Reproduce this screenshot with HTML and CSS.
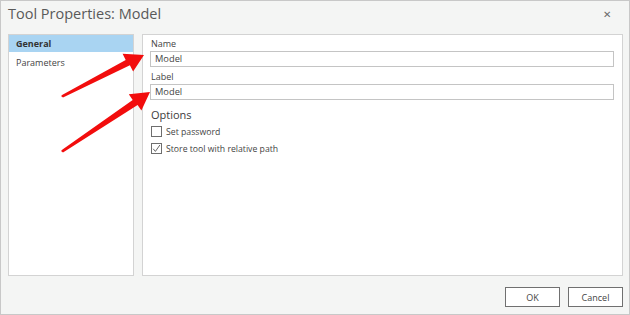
FILE: index.html
```html
<!DOCTYPE html>
<html lang="en">
<head>
    <meta charset="UTF-8">
    <title>Tool Properties: Model</title>
    <link rel="stylesheet" href="styles.css">
</head>
<body>
    <div class="dialog">
        <div class="titlebar">
            <h1 class="title">Tool Properties: Model</h1>
            <span class="close">&#x2715;</span>
        </div>

        <div class="content">
            <!-- Lista de secciones -->
            <ul class="nav">
                <li class="nav-item active">General</li>
                <li class="nav-item">Parameters</li>
            </ul>

            <!-- Panel de propiedades -->
            <div class="panel">
                <label class="field-label">Name</label>
                <div class="field-input">Model</div>
                <label class="field-label">Label</label>
                <div class="field-input">Model</div>

                <h2 class="section-title">Options</h2>
                <div class="check-row">
                    <span class="check-box"></span>
                    Set password
                </div>
                <div class="check-row">
                    <span class="check-box">
                        <svg width="9" height="9" viewBox="0 0 9 9"><path d="M1.2 4.8 L3.4 7.4 L7.9 1" fill="none" stroke="#555" stroke-width="0.9"/></svg>
                    </span>
                    Store tool with relative path
                </div>
            </div>
        </div>

        <div class="footer">
            <button class="btn">OK</button>
            <button class="btn">Cancel</button>
        </div>

        <!-- Flechas de anotación -->
        <svg class="arrows" width="630" height="315" viewBox="0 0 630 315">
            <polygon points="61,96 62.5,94.8 125.7,60 122.6,53.8 144,55 133.1,71.6 129.9,65.3 63,97.5" fill="#f20d0d"/>
            <polygon points="61,151 62.5,149.4 132.7,100 128.8,94.3 150,92 141.4,110.6 137.6,104.9 63,152.5" fill="#f20d0d"/>
        </svg>
    </div>
</body>
</html>
```

FILE: styles.css
```css
* {
    margin: 0;
    padding: 0;
    box-sizing: border-box;
}

body {
    font-family: "Open Sans", "Noto Sans", sans-serif;
    background: #ffffff;
    color: #444;
}

.dialog {
    position: relative;
    width: 630px;
    height: 315px;
    background: #f4f5f4;
    border: 1px solid #c8c8c8;
    display: flex;
    flex-direction: column;
}

.titlebar {
    height: 33px;
    display: flex;
    justify-content: space-between;
    align-items: flex-start;
    padding: 3px 18px 0 7px;
}

.title {
    font-size: 14.5px;
    font-weight: 400;
    color: #595959;
    line-height: 20px;
}

.close {
    font-size: 10px;
    color: #6a6a6a;
    line-height: 20px;
}

.content {
    display: flex;
    gap: 8px;
    padding: 0 6px 0 7px;
    height: 242px;
}

.nav {
    list-style: none;
    width: 126px;
    background: #fff;
    border: 1px solid #d3d3d3;
    display: flex;
    flex-direction: column;
    gap: 2px;
}

.nav-item {
    height: 17px;
    line-height: 17px;
    padding-left: 7px;
    font-size: 9px;
    color: #444;
}

.nav-item.active {
    background: #a9d4f2;
    font-weight: 700;
    color: #333;
}

.panel {
    flex: 1;
    background: #fff;
    border: 1px solid #d3d3d3;
    padding: 2px 8px 0 7px;
}

.field-label {
    display: block;
    font-size: 9px;
    line-height: 14px;
    padding-left: 1px;
    color: #444;
}

.field-input {
    height: 16px;
    border: 1px solid #c4c4c4;
    font-size: 9.3px;
    line-height: 14px;
    padding-left: 4px;
    color: #444;
    margin-bottom: 3px;
}

.section-title {
    font-size: 11px;
    font-weight: 400;
    line-height: 16px;
    margin-top: 7px;
    padding-left: 1px;
    color: #3c3c3c;
}

.check-row {
    display: flex;
    align-items: center;
    gap: 4px;
    height: 17px;
    font-size: 8.7px;
    padding-left: 1px;
    color: #444;
}

.check-box {
    width: 11px;
    height: 11px;
    border: 1px solid #6e6e6e;
    background: #fff;
    display: flex;
    align-items: center;
    justify-content: center;
}

.footer {
    display: flex;
    justify-content: flex-end;
    gap: 8px;
    padding: 11px 6px 0 0;
}

.btn {
    width: 55px;
    height: 20px;
    background: #fff;
    border: 1px solid #707070;
    font-family: inherit;
    font-size: 9px;
    color: #444;
}

.arrows {
    position: absolute;
    left: -1px;
    top: -1px;
    pointer-events: none;
}
```
